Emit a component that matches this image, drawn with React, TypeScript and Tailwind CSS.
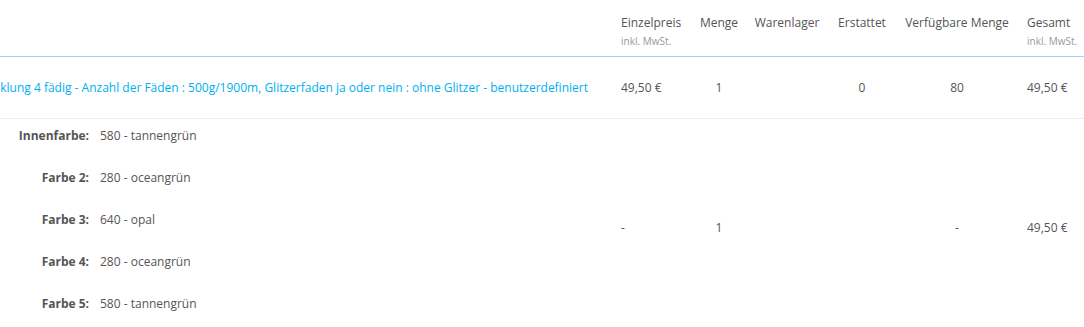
const COLS = "grid grid-cols-[611px_82px_52px_84px_66px_124px_65px]";

const ATTRIBUTES = [
  { label: "Innenfarbe:", value: "580 - tannengrün" },
  { label: "Farbe 2:", value: "280 - oceangrün" },
  { label: "Farbe 3:", value: "640 - opal" },
  { label: "Farbe 4:", value: "280 - oceangrün" },
  { label: "Farbe 5:", value: "580 - tannengrün" },
];

export default function App() {
  return (
    <div className="h-[327px] w-[1084px] overflow-hidden bg-white font-['Open_Sans',sans-serif] text-[12px] text-[#555]">
      {/* Header */}
      <div className={`${COLS} h-[57px] border-b border-[#a0d0eb]`}>
        <div />
        <div className="pl-[10px] pt-[14px]">
          <div className="leading-[18px]">Einzelpreis</div>
          <div className="mt-[3px] text-[10px] leading-[13px] text-[#999]">inkl. MwSt.</div>
        </div>
        <div className="pt-[14px] text-center leading-[18px]">Menge</div>
        <div className="pt-[14px] text-center leading-[18px]">Warenlager</div>
        <div className="pt-[14px] text-center leading-[18px]">Erstattet</div>
        <div className="pt-[14px] text-center leading-[18px]">Verfügbare Menge</div>
        <div className="pl-[8px] pt-[14px]">
          <div className="leading-[18px]">Gesamt</div>
          <div className="mt-[3px] text-[10px] leading-[13px] text-[#999]">inkl. MwSt.</div>
        </div>
      </div>

      {/* Product row */}
      <div className={`${COLS} h-[62px] items-center border-b border-[#eaedef]`}>
        <div className="flex justify-end overflow-hidden pr-[23px]">
          <span className="whitespace-nowrap text-[#00aff0]">
            Bobbel Farbverlaufswolle Wicklung 4 fädig - Anzahl der Fäden : 500g/1900m, Glitzerfaden ja oder nein : ohne Glitzer - benutzerdefiniert
          </span>
        </div>
        <div className="pl-[10px]">49,50 €</div>
        <div className="text-center">1</div>
        <div className="text-center" />
        <div className="text-center">0</div>
        <div className="text-center">80</div>
        <div className="pl-[8px]">49,50 €</div>
      </div>

      {/* Customization row */}
      <div className={`${COLS} h-[218px] items-center`}>
        <div className="flex flex-col gap-[24px] self-start pt-[8px]">
          {ATTRIBUTES.map((a) => (
            <div key={a.label} className="flex leading-[18px]">
              <span className="w-[90px] pr-[1px] text-right font-bold">{a.label}</span>
              <span className="pl-[10px]">{a.value}</span>
            </div>
          ))}
        </div>
        <div className="pl-[10px]">-</div>
        <div className="text-center">1</div>
        <div />
        <div />
        <div className="text-center">-</div>
        <div className="pl-[8px]">49,50 €</div>
      </div>
    </div>
  );
}
